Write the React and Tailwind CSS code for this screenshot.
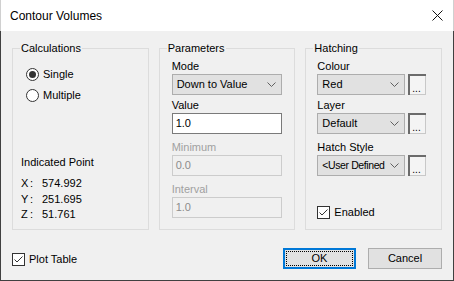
import React from 'react';

const font = { fontFamily: '"Liberation Sans", Arial, sans-serif' };

function Chevron() {
  return (
    <svg width="9" height="5" viewBox="0 0 9 5" className="shrink-0">
      <path d="M0.5 0.5 L4.5 4.5 L8.5 0.5" fill="none" stroke="#606060" strokeWidth="1" />
    </svg>
  );
}

function Combo({ value, width, tight }) {
  return (
    <div
      className="flex h-[21px] items-center justify-between border border-[#adadad] bg-[#e1e1e1] pl-[4px] pr-[5px] text-[11px] text-black"
      style={{ width }}
    >
      <span className={`whitespace-nowrap ${tight ? 'text-[10.5px] tracking-[-0.4px]' : ''}`}>{value}</span>
      <Chevron />
    </div>
  );
}

function Ellipsis() {
  return (
    <div className="ml-[3px] flex h-[21px] w-[18px] items-end border-l-2 border-t-2 border-[#6b6b6b] bg-[#f4f4f4] pb-[2px] pl-[2px] shadow-[inset_-1px_-1px_0_#c8c8c8]">
      <span className="text-[10px] leading-[8px] text-black">...</span>
    </div>
  );
}

function Label({ children, disabled, className = '' }) {
  return (
    <div
      className={`h-[15px] text-[11px] leading-[15px] ${disabled ? 'text-[#a0a0a0]' : 'text-black'} ${className}`}
    >
      {children}
    </div>
  );
}

function Field({ value, disabled }) {
  return (
    <div
      className={`flex h-[21px] w-[110px] items-center px-[3px] text-[11px] ${
        disabled
          ? 'border border-[#cccccc] bg-[#f0f0f0] text-[#8c8c8c]'
          : 'border border-[#7a7a7a] bg-white text-black'
      }`}
    >
      {value}
    </div>
  );
}

function Group({ title, children }) {
  return (
    <div className="relative h-[182px] w-[137px] border border-[#dcdcdc]">
      <span className="absolute left-[7px] top-[-8px] bg-[#f0f0f0] px-[1px] text-[11px] leading-[15px] text-black">
        {title}
      </span>
      {children}
    </div>
  );
}

function Radio({ checked, label }) {
  return (
    <div className="flex h-[13px] items-center gap-[4px]">
      <div className="flex h-[13px] w-[13px] items-center justify-center rounded-full border border-[#333333] bg-white">
        {checked && <div className="h-[7px] w-[7px] rounded-full bg-[#333333]" />}
      </div>
      <span className="text-[11px] leading-[13px] text-black">{label}</span>
    </div>
  );
}

function Check({ label }) {
  return (
    <div className="flex h-[13px] items-center gap-[4px]">
      <div className="flex h-[13px] w-[13px] items-center justify-center border border-[#333333] bg-white">
        <svg width="11" height="11" viewBox="0 0 11 11">
          <path d="M1.5 5.5 L4 8 L9.5 2.5" fill="none" stroke="#333333" strokeWidth="1" />
        </svg>
      </div>
      <span className="text-[11px] leading-[13px] text-black">{label}</span>
    </div>
  );
}

export default function App() {
  return (
    <div className="flex h-[281px] w-[454px] flex-col bg-white" style={font}>
      <div className="flex h-[31px] shrink-0 items-center justify-between border-x border-[#d0d0d0] bg-white pl-[9px] pr-[10px]">
        <span className="text-[12px] text-black">Contour Volumes</span>
        <svg width="11" height="11" viewBox="0 0 11 11">
          <path d="M0.5 0.5 L10.5 10.5 M10.5 0.5 L0.5 10.5" stroke="#111" strokeWidth="1" />
        </svg>
      </div>

      <div className="flex flex-1 flex-col border-x border-b border-[#404040] bg-[#f0f0f0] px-[11px]">
        <div className="mt-[17px] flex gap-[10px]">
          <Group title="Calculations">
            <div className="flex flex-col pl-[13px] pt-[19px]">
              <div className="flex flex-col gap-[8px]">
                <Radio checked label="Single" />
                <Radio label="Multiple" />
              </div>
              <div className="ml-[-5px] mt-[53px] flex flex-col text-[11px] text-black">
                <div className="leading-[15px]">Indicated Point</div>
                <div className="mt-[6px] flex flex-col leading-[15.5px]">
                  <div className="flex"><span className="w-[9px]">X</span><span className="w-[12px]">:</span><span>574.992</span></div>
                  <div className="flex"><span className="w-[9px]">Y</span><span className="w-[12px]">:</span><span>251.695</span></div>
                  <div className="flex"><span className="w-[9px]">Z</span><span className="w-[12px]">:</span><span>51.761</span></div>
                </div>
              </div>
            </div>
          </Group>

          <Group title="Parameters">
            <div className="flex flex-col pl-[12px] pt-[10px]">
              <Label>Mode</Label>
              <Combo value="Down to Value" width={110} />
              <Label className="mt-[3px]">Value</Label>
              <Field value="1.0" />
              <Label disabled className="mt-[6px]">Minimum</Label>
              <Field value="0.0" disabled />
              <Label disabled className="mt-[6px]">Interval</Label>
              <Field value="1.0" disabled />
            </div>
          </Group>

          <Group title="Hatching">
            <div className="flex flex-col pl-[11px] pt-[10px]">
              <Label>Colour</Label>
              <div className="flex">
                <Combo value="Red" width={88} />
                <Ellipsis />
              </div>
              <Label className="mt-[3px]">Layer</Label>
              <div className="flex">
                <Combo value="Default" width={88} />
                <Ellipsis />
              </div>
              <Label className="mt-[6px]">Hatch Style</Label>
              <div className="flex">
                <Combo value="<User Defined" width={88} tight />
                <Ellipsis />
              </div>
              <div className="mt-[30px]">
                <Check label="Enabled" />
              </div>
            </div>
          </Group>
        </div>

        <div className="mt-[18px] flex items-start">
          <div className="mt-[5px]">
            <Check label="Plot Table" />
          </div>
          <div className="ml-auto flex gap-[12px]">
            <div className="flex h-[21px] w-[73px] items-center justify-center border-2 border-[#0078d7] bg-[#e1e1e1] p-[1px]">
              <div className="flex h-full w-full items-center justify-center border border-dotted border-black text-[11px] text-black">
                OK
              </div>
            </div>
            <div className="flex h-[21px] w-[74px] items-center justify-center border border-[#adadad] bg-[#e1e1e1] text-[11px] text-black">
              Cancel
            </div>
          </div>
        </div>
      </div>
    </div>
  );
}
